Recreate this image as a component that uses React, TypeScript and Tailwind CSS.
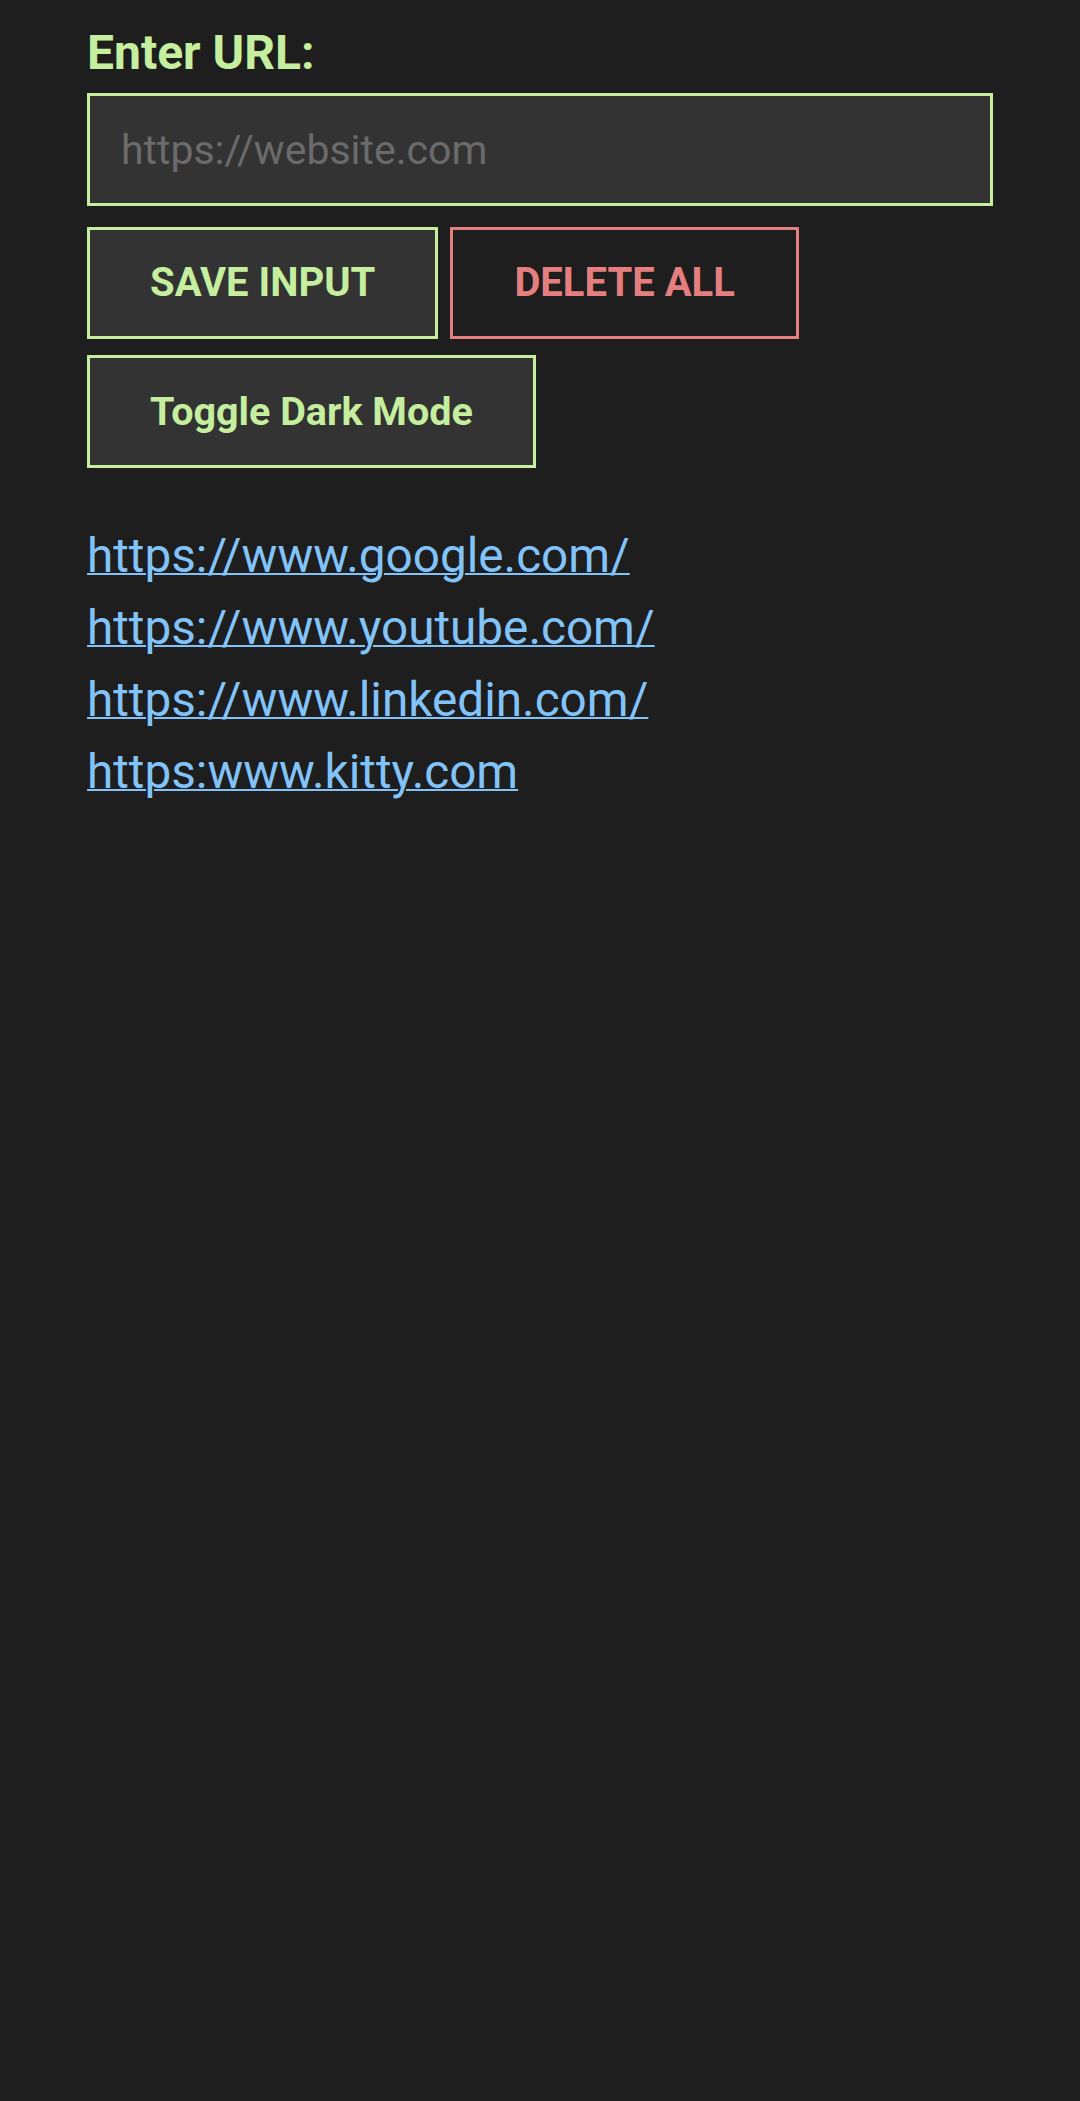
const links = [
  "https://www.google.com/",
  "https://www.youtube.com/",
  "https://www.linkedin.com/",
  "https:www.kitty.com",
];

const App = () => {
  return (
    <div
      className="min-h-screen w-full bg-[#1e1e1e] px-[87px] pt-[25px]"
      style={{ fontFamily: "Roboto, 'Noto Sans', sans-serif" }}
    >
      <label className="block text-[48px] leading-[56px] font-bold text-[#c5ef9f]">
        Enter URL:
      </label>
      <input
        type="text"
        placeholder="https://website.com"
        className="mt-[12px] block h-[113px] w-full border-[3px] border-[#c5ef9f] bg-[#333333] px-[31px] text-[41px] text-white outline-none placeholder:text-[#6b6b6b]"
      />
      <div className="mt-[21px] flex gap-[12px]">
        <button className="flex h-[112px] items-center justify-center border-[3px] border-[#c5ef9f] bg-[#333333] px-[60px] text-[40px] font-bold text-[#c5ef9f]">
          SAVE INPUT
        </button>
        <button className="flex h-[112px] items-center justify-center border-[3px] border-[#e57f7f] bg-[#1e1e1e] px-[61px] text-[40px] font-bold text-[#e57f7f]">
          DELETE ALL
        </button>
      </div>
      <button className="mt-[16px] flex h-[113px] items-center justify-center border-[3px] border-[#c5ef9f] bg-[#333333] px-[60px] text-[39.5px] font-bold text-[#c5ef9f]">
        Toggle Dark Mode
      </button>
      <ul className="mt-[52px]">
        {links.map((link) => (
          <li key={link}>
            <a
              href="#"
              className="text-[47.7px] leading-[72px] text-[#82c3f9] underline decoration-2"
            >
              {link}
            </a>
          </li>
        ))}
      </ul>
    </div>
  );
};

export default App;
